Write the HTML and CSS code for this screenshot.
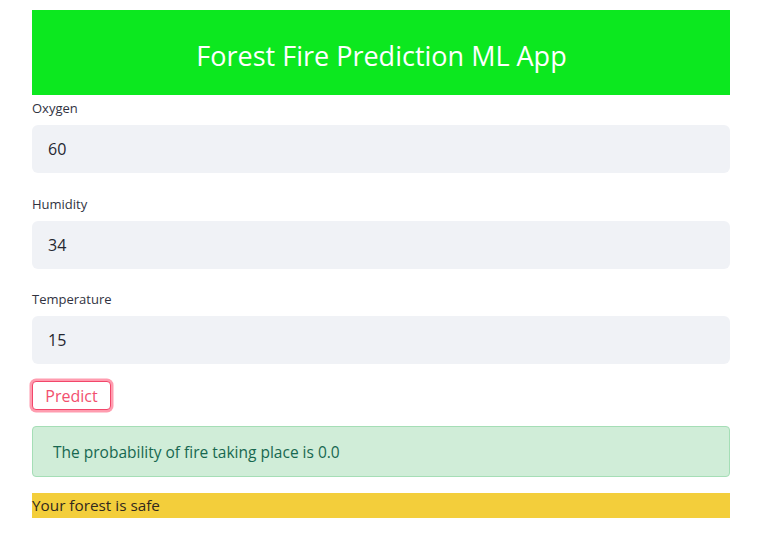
FILE: index.html
```html
<!DOCTYPE html>
<html lang="en">
<head>
<meta charset="utf-8">
<title>Forest Fire Prediction ML App</title>
<link rel="stylesheet" href="styles.css">
</head>
<body>
<main class="app">
  <div class="banner"><h2 class="banner-title">Forest Fire Prediction ML App</h2></div>

  <div class="field field-first">
    <label class="field-label">Oxygen</label>
    <div class="field-input">60</div>
  </div>
  <div class="field">
    <label class="field-label">Humidity</label>
    <div class="field-input">34</div>
  </div>
  <div class="field">
    <label class="field-label">Temperature</label>
    <div class="field-input">15</div>
  </div>

  <div class="actions"><button class="btn">Predict</button></div>

  <div class="alert-success">The probability of fire taking place is 0.0</div>

  <div class="result-bar">Your forest is safe</div>
</main>
</body>
</html>
```
FILE: styles.css
```css
* { box-sizing: border-box; }
html, body { margin: 0; padding: 0; background: #fff; }
body {
  font-family: "Open Sans", "Noto Sans", sans-serif;
  color: rgb(49, 51, 63);
}
.app {
  width: 698px;
  margin-left: 32px;
  padding-top: 10px;
  display: flex;
  flex-direction: column;
}
.banner {
  background: #0ce81f;
  height: 85px;
  display: flex;
  align-items: center;
  justify-content: center;
  padding-top: 6px;
}
.banner-title {
  margin: 0;
  color: #fff;
  font-weight: 400;
  font-size: 27px;
  line-height: 1;
  padding-left: 1px;
}
.field { display: flex; flex-direction: column; margin-bottom: 17px; }
.field-first { margin-bottom: 18px; }
.field-label {
  height: 30px;
  display: flex;
  align-items: center;
  font-size: 13px;
  padding-bottom: 4px;
  color: rgb(49, 51, 63);
}
.field-input {
  height: 48px;
  background: #f0f2f6;
  border-radius: 6px;
  display: flex;
  align-items: center;
  padding-left: 16px;
  font-size: 16px;
  color: rgb(38, 39, 48);
}
.actions { display: flex; margin-bottom: 16px; }
.btn {
  height: 29px;
  width: 79px;
  padding: 0;
  font-family: inherit;
  font-size: 16px;
  color: #f2506e;
  background: #fff;
  border: 1px solid #f2466a;
  border-radius: 4px;
  box-shadow: 0 0 0 2.5px rgba(255, 75, 110, 0.55);
}
.alert-success {
  height: 51px;
  background: rgb(208, 237, 216);
  border: 1px solid rgb(165, 222, 182);
  border-radius: 4px;
  display: flex;
  align-items: center;
  padding-left: 20px;
  font-size: 15.5px;
  color: rgb(23, 104, 80);
  margin-bottom: 16px;
}
.result-bar {
  height: 25px;
  background: #f3ce3b;
  font-size: 15.3px;
  line-height: 25px;
  color: rgb(49, 40, 30);
}
```
